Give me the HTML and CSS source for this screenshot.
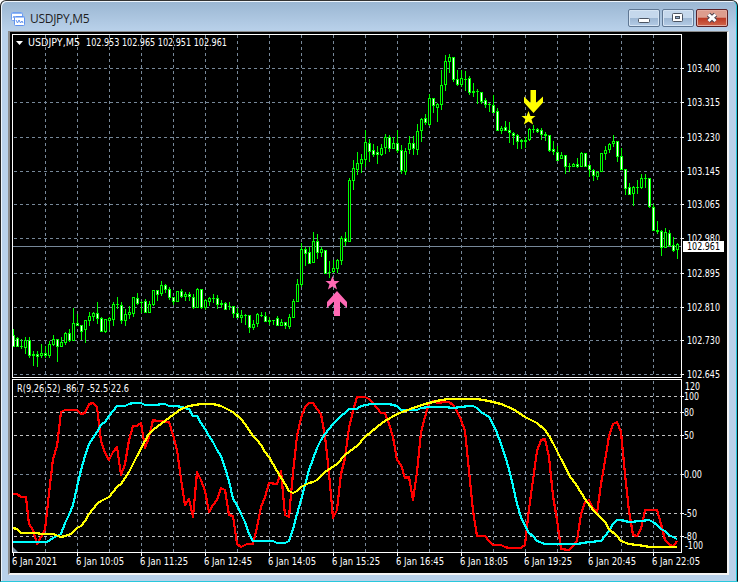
FILE: index.html
```html
<!DOCTYPE html>
<html lang="en">
<head>
    <meta charset="UTF-8">
    <title>USDJPY,M5</title>
    <link rel="stylesheet" href="styles.css">
</head>
<body>
    <div class="window">
        <div class="titlebar">
            <svg class="title-icon" width="14" height="14" viewBox="0 0 14 14">
                <rect x="0.5" y="0.5" width="11" height="8" rx="1" fill="#fff" stroke="#6f9ff0"/>
                <path d="M1 1.5h10" stroke="#8fb6f5"/>
                <path d="M2 6l1-2 1 2" fill="none" stroke="#6f9ff0"/>
                <rect x="3.5" y="4.5" width="10" height="9" rx="1" fill="#fff" stroke="#5f92ee"/>
                <path d="M4 5.5h9" stroke="#a9c6f7"/>
                <path d="M5 8l1.500 3 1.500-3 1.500 3 1.500-2 1 2" fill="none" stroke="#5f92ee"/>
            </svg>
            <h1 class="title">USDJPY,M5</h1>
            <div class="buttons">
                <button class="win-btn" aria-label="Minimize">
                    <svg width="12" height="12" viewBox="0 0 12 12"><rect x="0.500" y="6.500" width="11" height="4" rx="1" fill="#fff" stroke="#4c5562"/></svg>
                </button>
                <button class="win-btn" aria-label="Maximize">
                    <svg width="12" height="12" viewBox="0 0 12 12"><rect x="0.500" y="1.500" width="10" height="8" rx="1" fill="#fff" stroke="#4c5562"/><rect x="3.500" y="4.500" width="4" height="2" fill="#8fa9c8" stroke="#4c5562"/></svg>
                </button>
                <button class="win-btn close" aria-label="Close">
                    <svg width="12" height="12" viewBox="0 0 12 12"><path d="M2.500 2.500l7 6.500M9.500 2.500l-7 6.500" stroke="#4c4350" stroke-width="5"/><path d="M2.500 2.500l7 6.500M9.500 2.500l-7 6.500" stroke="#fff" stroke-width="3"/></svg>
                </button>
            </div>
        </div>
        <div class="client">
            <svg class="chart" id="chart" width="717" height="541" viewBox="10 32 717 541">
                <g id="grid"></g>
                <path class="price-line" d="M13 246.500H681"/>
                <g id="candles"></g>
                <g id="lines"></g>

                <!-- frames of both panes -->
                <path class="frame" d="M12.500 377.500V34.500H681.500V377.500ZM12.500 552.500V379.500H681.500V552.500Z"/>
                <path class="corner" d="M13 547v5h5z"/>

                <!-- signals -->
                <path class="sell" d="M530.500 90h5.500v13l7-6.500v6L533.500 113 524 102.500v-6l6.500 6.500z"/>
                <path class="sell" d="M528.500 111l1.900 5h5.100l-4 3.200 1.600 5.300-4.600-3-4.600 3 1.600-5.300-4-3.200h5.100z"/>
                <path class="buy" d="M332.500 276l1.900 5h5.100l-4 3.200 1.600 5.300-4.600-3-4.600 3 1.600-5.300-4-3.200h5.100z"/>
                <path class="buy" d="M334 316h6v-14.500l7 6.500v-6l-10-11-10 11v6l7-6.500z"/>

                <path fill="#fff" d="M16 41h7l-3.500 4z"/>
                <g id="labels"></g>
            </svg>
        </div>
    </div>
    <script src="chart.js"></script>
</body>
</html>
```
FILE: styles.css
```css
body {
    margin: 0;
    background-color: #fff;
    font-family: "Open Sans", "Noto Sans", sans-serif;
    overflow: hidden;
}

.window {
    box-sizing: border-box;
    width: 738px;
    height: 582px;
    padding: 0 7px 0 7px;
    border-left: 1px solid #222;
    border-right: 1px solid #111;
    border-top: 1px solid #333;
    border-bottom: 1px solid #28c8dc;
    border-radius: 6px 6px 0 0;
    background: linear-gradient(#9ab6d2, #b9d1ea 30px);
    box-shadow: inset 1px 1px 0 #eef5fc, inset -1px 0 0 #28c8dc;
}

.titlebar {
    display: flex;
    align-items: center;
    height: 30px;
    padding-left: 3px;
}

.title-icon {
    margin-top: 5px;
}

.title {
    flex: 1;
    margin: 5px 0 0 5px;
    font-size: 12px;
    font-weight: normal;
    line-height: 16px;
    letter-spacing: -0.3px;
    color: #1e1e1e;
}

.buttons {
    display: flex;
    gap: 2px;
    padding: 4px 2px 0 0;
}

.win-btn {
    display: flex;
    align-items: center;
    justify-content: center;
    box-sizing: border-box;
    width: 32px;
    height: 18px;
    padding: 0;
    border: 1px solid #5f7793;
    border-radius: 2px;
    background: linear-gradient(#c5d8ec 48%, #9db7d3 52%, #b4cce6);
    box-shadow: inset 0 0 0 1px #d5e4f3;
}

.win-btn.close {
    border-color: #5b2026;
    background: linear-gradient(#dd9d8e 45%, #bc3a25 52%, #d0664c);
    box-shadow: inset 0 0 0 1px #e5aca0;
}

.client {
    width: 717px;
    height: 541px;
    border-style: solid;
    border-width: 1px 2px 2px;
    border-color: #8c8c8c #f4f4f4 #f4f4f4 #8c8c8c;
    background-color: #000;
}

.chart {
    display: block;
    font-family: "DejaVu Sans Condensed", "DejaVu Sans", sans-serif;
    font-stretch: condensed;
    font-size: 10px;
    fill: #fff;
}

.grid-line,
.level-line {
    fill: none;
    stroke: #778899;
    stroke-dasharray: 3 3;
    shape-rendering: crispEdges;
}

.level-line {
    stroke: #c0c0c0;
}

.price-line {
    stroke: #778899;
    shape-rendering: crispEdges;
}

.frame,
.tick {
    fill: none;
    stroke: #fff;
    shape-rendering: crispEdges;
}

.corner {
    fill: #778899;
}

.candle {
    fill: #00ff00;
    shape-rendering: crispEdges;
}

.up {
    fill: #000;
    shape-rendering: crispEdges;
}

.down {
    fill: #fff;
    shape-rendering: crispEdges;
}

.line {
    fill: none;
    stroke-width: 2.2;
    stroke-linejoin: round;
    shape-rendering: crispEdges;
}

.red {
    stroke: #ff0000;
}

.aqua {
    stroke: #00ffff;
}

.yellow {
    stroke: #ffff00;
}

.sell {
    fill: #ffff00;
}

.buy {
    fill: #ff69b4;
}

.price-box {
    fill: #fff;
}

.price-text {
    fill: #000;
}
```
FILE: chart.js
```js
const NS = 'http://www.w3.org/2000/svg';

function add(parent, tag, attrs, text) {
    const el = document.createElementNS(NS, tag);
    for (const key in attrs) el.setAttribute(key, attrs[key]);
    if (text) el.textContent = text;
    document.getElementById(parent).appendChild(el);
}

function label(x, y, width, text, cls) {
    add('labels', 'text', { x: x, y: y, textLength: width, lengthAdjust: 'spacingAndGlyphs', class: cls || '' }, text);
}

// high, body top, body bottom, low, u = up / d = down
const candles = `
329 335 347 347 d,337 338 347 347 d,339 346 347 349 d,337 340 348 354 u,337 340 356 358 d,
351 354 356 366 u,351 354 357 367 d,344 353 356 358 u,346 353 356 358 d,341 344 356 358 u,
335 339 345 346 u,339 339 347 362 d,337 342 347 347 u,332 333 343 345 u,329 333 341 342 d,
308 323 341 341 u,314 323 326 326 d,325 325 332 340 d,320 320 330 343 u,312 316 321 326 u,
312 313 317 321 u,302 313 319 324 d,317 318 332 332 d,319 319 332 333 u,317 318 321 330 u,
302 304 320 326 u,297 304 305 309 u,302 305 321 324 d,309 314 321 326 u,306 312 315 319 u,
297 297 314 317 u,293 298 304 305 d,301 302 303 313 d,299 301 313 313 d,301 304 313 313 u,
290 290 305 306 u,290 290 295 301 d,281 285 294 296 u,284 285 290 293 d,287 289 298 300 d,
297 297 302 305 d,291 291 302 302 u,289 291 297 298 d,292 294 297 301 u,292 294 297 301 d,
294 297 308 309 d,288 289 308 308 u,289 289 308 309 d,299 300 308 310 u,297 298 302 306 u,
294 298 299 303 u,295 298 305 309 d,300 303 305 308 d,302 303 310 310 d,302 306 307 310 d,
306 306 314 318 d,308 313 318 318 d,310 315 318 323 u,314 315 316 325 u,315 315 328 333 d,
320 324 328 330 u,313 314 324 327 u,312 315 316 317 d,312 316 322 322 d,317 320 322 325 d,
320 320 321 325 d,316 318 326 326 d,319 322 326 326 u,322 322 326 329 d,314 317 327 329 u,
299 301 318 318 u,279 284 302 302 u,243 249 285 287 u,247 249 254 266 d,247 252 264 264 d,
232 241 263 263 u,234 241 253 259 d,247 249 253 257 u,250 250 274 274 d,261 272 273 278 d,
260 268 272 273 u,259 260 269 273 u,236 238 261 265 u,232 238 242 246 d,178 180 242 242 u,
160 168 181 190 u,152 163 170 175 u,154 159 164 173 u,130 142 160 167 u,139 143 152 162 d,
144 150 155 157 d,146 152 155 164 d,144 148 155 156 u,134 137 148 154 u,135 137 149 152 d,
137 143 149 149 u,130 143 151 153 d,145 150 171 174 d,148 151 172 175 u,136 143 150 154 u,
136 143 149 155 d,124 131 150 155 u,118 119 131 142 u,114 118 123 125 d,94 98 125 126 u,
98 98 106 113 d,103 104 108 122 u,70 85 105 110 u,55 61 85 91 u,54 57 62 73 u,
57 57 80 82 d,70 79 85 86 d,70 78 85 87 u,71 79 80 91 u,76 78 93 95 d,
83 91 93 97 u,89 91 92 104 d,92 92 102 104 d,98 100 105 108 d,103 104 105 112 u,
95 105 113 113 d,108 111 131 131 d,126 128 131 134 u,121 127 131 131 d,122 130 133 143 d,
132 133 136 145 d,134 135 142 149 d,139 140 142 149 u,137 140 142 148 d,128 129 140 141 u,
125 129 130 133 u,128 129 132 133 d,128 130 135 140 d,132 134 136 141 d,135 135 151 152 d,
141 149 152 155 d,146 152 161 161 d,152 155 159 159 u,155 155 167 174 d,163 166 167 172 u,
163 164 167 167 u,158 164 167 168 d,152 153 167 167 u,153 153 167 167 d,164 165 170 177 d,
169 170 176 181 d,171 172 177 180 u,153 153 172 172 u,146 150 154 160 u,143 144 150 153 u,
135 141 144 147 u,141 141 157 162 d,148 156 170 170 d,169 169 189 195 d,183 187 195 195 d,
186 187 194 206 u,180 187 188 194 d,174 178 188 189 u,174 178 179 188 d,178 178 207 208 d,
204 207 231 231 d,221 230 232 234 d,230 231 248 256 d,228 232 248 248 u,230 233 246 247 d,
237 245 251 252 d,243 244 250 259 u`;

// indicator buffers as x,y pairs
const red = '13,494 17,494 21,497 26,497 29,524 33,530 37,544 41,537 45,530 49,493 53,459 57,446 61,412 65,410 77,410 81,414 85,413 89,404 93,403 97,407 101,441 105,453 109,460 113,452 117,447 121,475 125,464 129,440 133,426 137,426 141,423 145,448 149,437 153,420 157,421 169,422 173,435 177,450 181,479 185,505 189,499 193,517 197,472 201,480 205,491 209,512 213,505 217,500 221,488 225,490 229,515 233,516 237,544 241,547 247,544 253,544 257,527 261,507 265,497 269,483 277,484 281,471 285,515 289,517 293,473 297,436 301,418 305,407 309,403 313,403 317,409 321,414 325,436 329,473 333,518 337,510 341,474 345,458 349,428 353,411 357,397 365,397 369,399 373,403 377,408 381,413 385,413 389,424 393,437 397,460 401,465 405,478 409,477 413,500 417,472 421,432 425,417 429,403 433,401 437,403 445,402 449,402 453,405 457,411 461,420 465,431 469,471 473,511 477,536 485,536 489,541 493,545 501,545 505,547 509,548 521,548 525,545 529,509 533,480 537,451 541,440 545,439 549,457 553,496 557,520 561,549 569,550 573,546 577,541 581,514 585,502 589,500 593,508 597,513 601,484 605,461 609,436 613,424 617,422 621,432 625,474 629,511 633,535 637,536 641,529 645,510 657,510 661,524 665,540 669,544 673,547 677,541';
const aqua = '13,542 47,542 53,538 61,534 65,523 69,515 73,505 77,487 81,470 85,456 89,444 93,438 97,432 101,425 105,422 109,416 113,411 117,406 125,406 129,404 133,403 141,403 145,405 153,405 165,404 169,406 177,406 181,407 189,409 193,416 197,416 201,423 205,429 209,436 213,442 217,450 221,456 225,468 229,481 233,499 237,505 241,514 245,522 249,534 253,541 273,541 277,543 285,543 289,541 293,529 297,514 301,500 305,485 309,470 313,459 317,448 321,440 325,434 329,429 333,424 337,420 341,416 345,413 349,409 357,409 361,406 371,404 389,404 397,406 401,410 417,410 421,408 429,407 445,407 453,408 461,407 469,406 473,406 477,408 481,412 489,417 493,424 497,433 501,444 505,456 509,469 513,486 517,504 521,517 525,526 529,533 533,536 537,541 545,544 577,544 589,542 601,541 605,536 609,531 613,524 617,520 621,520 629,522 641,521 649,520 653,522 657,525 661,529 665,531 669,535 673,537 677,539';
const yellow = '13,528 17,529 21,533 37,533 41,534 53,534 61,537 65,536 71,534 77,528 81,526 85,521 89,514 97,504 101,501 109,497 117,487 121,484 129,472 137,456 145,441 149,434 153,430 161,424 173,415 181,409 189,406 201,404 213,404 221,406 233,412 241,419 245,424 249,430 253,436 257,440 261,445 265,452 269,457 277,471 285,484 289,491 293,493 297,491 301,487 309,483 313,482 317,480 325,472 337,464 345,455 357,446 365,437 377,427 385,421 397,414 413,408 425,404 441,400 449,399 477,399 489,401 501,404 513,409 525,417 537,423 545,430 549,436 553,443 557,451 561,459 565,466 569,475 577,486 585,499 593,510 601,518 605,522 609,529 617,536 621,541 629,544 645,546 649,547 677,547';

const prices = [['103.400', 68], ['103.315', 102], ['103.230', 137], ['103.145', 171], ['103.065', 204],
    ['102.980', 238], ['102.895', 273], ['102.810', 307], ['102.730', 340], ['102.645', 374]];
const levels = [['100', 396, 15], ['80', 412, 10], ['50', 435, 10], ['0.00', 474, 18], ['-50', 513, 13], ['-80', 536, 13]];
const times = ['6 Jan 2021', '6 Jan 10:05', '6 Jan 11:25', '6 Jan 12:45', '6 Jan 14:05', '6 Jan 15:25',
    '6 Jan 16:45', '6 Jan 18:05', '6 Jan 19:25', '6 Jan 20:45', '6 Jan 22:05'];

// grid
for (let x = 45; x < 681; x += 32) {
    add('grid', 'path', { class: 'grid-line', d: `M${x}.5 35V377M${x}.5 381V552` });
}
prices.forEach(([text, y]) => {
    add('grid', 'path', { class: 'grid-line', d: `M14 ${y}.5H681` });
    add('labels', 'path', { class: 'tick', d: `M682 ${y}.5h2` });
    label(687, y + 4, 33, text);
});
levels.forEach(([text, y, width]) => {
    add('grid', 'path', { class: text === '0.00' ? 'grid-line' : 'level-line', d: `M14 ${y}.5H681` });
    add('labels', 'path', { class: 'tick', d: `M682 ${y}.5h2` });
    label(684, y + 4, width, text);
});
label(685, 390, 15, '120');
label(685, 549, 18, '-100');

// time axis
times.forEach((text, i) => {
    const x = 13 + i * 64;
    add('labels', 'path', { class: 'tick', d: `M${x}.5 553v3` });
    label(x - 1, 565, i ? 48 : 45, text);
});

// candles
candles.trim().split(/,\s*/).forEach((row, i) => {
    const [high, top, bottom, low, dir] = row.split(' ');
    const x = 13 + i * 4;
    const height = bottom - top;
    add('candles', 'rect', { class: 'candle', x: x, y: high, width: 1, height: low - high });
    add('candles', 'rect', { class: 'candle', x: x - 1, y: top, width: 3, height: height });
    if (height > 2) {
        add('candles', 'rect', { class: dir === 'u' ? 'up' : 'down', x: x, y: +top + 1, width: 1, height: height - 2 });
    }
});

add('lines', 'polyline', { class: 'line red', points: red });
add('lines', 'polyline', { class: 'line aqua', points: aqua });
add('lines', 'polyline', { class: 'line yellow', points: yellow });

// headers and current price
label(28, 46, 52, 'USDJPY,M5');
label(86, 46, 141, '102.953 102.965 102.951 102.961');
label(17, 392, 112, 'R(9,26,52) -86.7 -52.5 22.6');
add('labels', 'rect', { class: 'price-box', x: 683, y: 241, width: 41, height: 11 });
label(687, 250, 33, '102.961', 'price-text');
```
